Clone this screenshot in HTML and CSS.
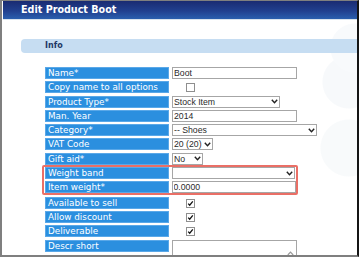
FILE: index.html
```html
<!DOCTYPE html>
<html lang="en">
<head>
    <meta charset="UTF-8">
    <title>Edit Product Boot</title>
    <link rel="stylesheet" href="styles.css">
</head>
<body>
    <div class="window">
        <div class="titlebar">Edit Product Boot</div>

        <div class="content">
            <div class="section-bar">Info</div>

            <div class="form">
                <div class="row">
                    <div class="label">Name*</div>
                    <input type="text" class="field w-long" value="Boot">
                </div>
                <div class="row">
                    <div class="label">Copy name to all options</div>
                    <span class="check"><svg width="9" height="9" viewBox="0 0 9 9"><rect x="0.5" y="0.5" width="8" height="8" fill="#fff" stroke="#8f8f8f"/></svg></span>
                </div>
                <div class="row">
                    <div class="label">Product Type*</div>
                    <div class="select w-type">
                        <span>Stock Item</span>
                        <svg class="chevron" width="7" height="5" viewBox="0 0 7 5"><path d="M0.8 0.8 L3.5 3.8 L6.2 0.8" fill="none" stroke="#222" stroke-width="1.4"/></svg>
                    </div>
                </div>
                <div class="row">
                    <div class="label">Man. Year</div>
                    <input type="text" class="field w-long" value="2014">
                </div>
                <div class="row">
                    <div class="label">Category*</div>
                    <div class="select w-cat">
                        <span>-- Shoes</span>
                        <svg class="chevron" width="7" height="5" viewBox="0 0 7 5"><path d="M0.8 0.8 L3.5 3.8 L6.2 0.8" fill="none" stroke="#222" stroke-width="1.4"/></svg>
                    </div>
                </div>
                <div class="row">
                    <div class="label">VAT Code</div>
                    <div class="select w-vat">
                        <span>20 (20)</span>
                        <svg class="chevron" width="7" height="5" viewBox="0 0 7 5"><path d="M0.8 0.8 L3.5 3.8 L6.2 0.8" fill="none" stroke="#222" stroke-width="1.4"/></svg>
                    </div>
                </div>
                <div class="row">
                    <div class="label">Gift aid*</div>
                    <div class="select w-gift">
                        <span>No</span>
                        <svg class="chevron" width="7" height="5" viewBox="0 0 7 5"><path d="M0.8 0.8 L3.5 3.8 L6.2 0.8" fill="none" stroke="#222" stroke-width="1.4"/></svg>
                    </div>
                </div>

                <!-- highlighted fields -->
                <div class="highlight">
                    <div class="row">
                        <div class="label">Weight band</div>
                        <div class="select w-band">
                            <span></span>
                            <svg class="chevron" width="7" height="5" viewBox="0 0 7 5"><path d="M0.8 0.8 L3.5 3.8 L6.2 0.8" fill="none" stroke="#222" stroke-width="1.4"/></svg>
                        </div>
                    </div>
                    <div class="row">
                        <div class="label">Item weight*</div>
                        <input type="text" class="field w-long" value="0.0000">
                    </div>
                </div>

                <div class="row">
                    <div class="label">Available to sell</div>
                    <span class="check"><svg width="9" height="9" viewBox="0 0 9 9"><rect x="0.5" y="0.5" width="8" height="8" fill="#fff" stroke="#8f8f8f"/><path d="M2.2 4.6 L3.7 6.2 L6.8 2.4" fill="none" stroke="#111" stroke-width="1.3"/></svg></span>
                </div>
                <div class="row">
                    <div class="label">Allow discount</div>
                    <span class="check"><svg width="9" height="9" viewBox="0 0 9 9"><rect x="0.5" y="0.5" width="8" height="8" fill="#fff" stroke="#8f8f8f"/><path d="M2.2 4.6 L3.7 6.2 L6.8 2.4" fill="none" stroke="#111" stroke-width="1.3"/></svg></span>
                </div>
                <div class="row">
                    <div class="label">Deliverable</div>
                    <span class="check"><svg width="9" height="9" viewBox="0 0 9 9"><rect x="0.5" y="0.5" width="8" height="8" fill="#fff" stroke="#8f8f8f"/><path d="M2.2 4.6 L3.7 6.2 L6.8 2.4" fill="none" stroke="#111" stroke-width="1.3"/></svg></span>
                </div>
                <div class="row row-tall">
                    <div class="label">Descr short</div>
                    <div class="textbox w-long">
                        <svg class="scroll-up" width="7" height="5" viewBox="0 0 7 5"><path d="M0.8 4 L3.5 1.2 L6.2 4" fill="none" stroke="#9a9a9a" stroke-width="1.2"/></svg>
                    </div>
                </div>
            </div>
        </div>
    </div>
</body>
</html>
```

FILE: styles.css
```css
/* --- General Setup --- */
:root {
    --label-blue: #2b8fdf;
    --bar-blue: #c6ddf2;
    --frame-gray: #7f7f7f;
    --field-border: #a6a6a6;
    --mark-red: #ea6f66;
}

body {
    margin: 0;
    background: #ffffff;
    font-family: 'DejaVu Sans', Verdana, sans-serif;
}

/* --- Window Frame --- */
.window {
    width: 359px;
    height: 257px;
    box-sizing: border-box;
    border-left: 2px solid var(--frame-gray);
    border-top: 1px solid var(--frame-gray);
    border-right: 2px solid #151515;
    border-bottom: 2px solid var(--frame-gray);
    padding-left: 1px;
    overflow: hidden;
    background: #ffffff;
}

.titlebar {
    height: 18px;
    line-height: 18px;
    padding-left: 18px;
    color: #ffffff;
    font-weight: bold;
    font-size: 9.6px;
    background: linear-gradient(to bottom, #1a2b72 0%, #21408f 55%, #2a5fae 100%);
    border-bottom: 1px solid #d9e3ed;
}

/* faint decorative bubbles in the background */
.content {
    height: 240px;
    padding-top: 19px;
    box-sizing: border-box;
    background:
        radial-gradient(circle at 352px 28px, #f8fafc 0 24px, transparent 25px),
        radial-gradient(circle at 346px 62px, #f7f9fb 0 26px, transparent 27px),
        radial-gradient(circle at 346px 128px, #f8fafb 0 28px, transparent 29px);
}

/* --- Section Bar --- */
.section-bar {
    margin-left: 18px;
    height: 14px;
    line-height: 14px;
    padding-left: 24px;
    background: var(--bar-blue);
    border-radius: 4px 0 0 4px;
    color: #1e3866;
    font-weight: bold;
    font-size: 8px;
}

/* --- Form Rows --- */
.form {
    margin: 14px 0 0 42px;
    display: flex;
    flex-direction: column;
    gap: 2.3px;
}

.row {
    display: flex;
    align-items: flex-start;
    gap: 3px;
    height: 12px;
}

.label {
    width: 124px;
    height: 12px;
    box-sizing: border-box;
    padding-left: 2px;
    background: var(--label-blue);
    border: 1px solid #5aa8e8;
    color: #ffffff;
    font-size: 8.8px;
    line-height: 10px;
    white-space: nowrap;
}

.field,
.select,
.textbox {
    box-sizing: border-box;
    height: 12px;
    margin: 0;
    padding: 0 0 0 1px;
    border: 1px solid var(--field-border);
    border-radius: 0;
    background: #ffffff;
    color: #2a2a2a;
    font-family: 'Liberation Sans', Arial, sans-serif;
    font-size: 8.7px;
    line-height: 10px;
    outline: none;
}

.w-long { width: 125px; }
.w-type { width: 108px; }
.w-cat { width: 145px; }
.w-vat { width: 41px; }
.w-gift { width: 31px; }
.w-band { width: 123px; }

/* --- Selects --- */
.select {
    display: flex;
    align-items: center;
    justify-content: space-between;
    gap: 2px;
    padding-right: 1px;
    white-space: nowrap;
}

.select .chevron {
    flex-shrink: 0;
}

/* --- Checkboxes --- */
.check {
    display: block;
    margin: 2px 0 0 14px;
    height: 9px;
}

.check svg {
    display: block;
}

/* --- Textarea --- */
.row-tall {
    height: 30px;
}

.textbox {
    position: relative;
    height: 30px;
}

.textbox .scroll-up {
    position: absolute;
    right: 2px;
    top: 10px;
}

/* --- Annotation Box --- */
.highlight {
    width: 256px;
    box-sizing: border-box;
    margin: -2px 0 -1px -3px;
    padding: 0 0 0 1px;
    border: 2px solid var(--mark-red);
    border-radius: 2px;
    display: flex;
    flex-direction: column;
    gap: 2.3px;
}
```
